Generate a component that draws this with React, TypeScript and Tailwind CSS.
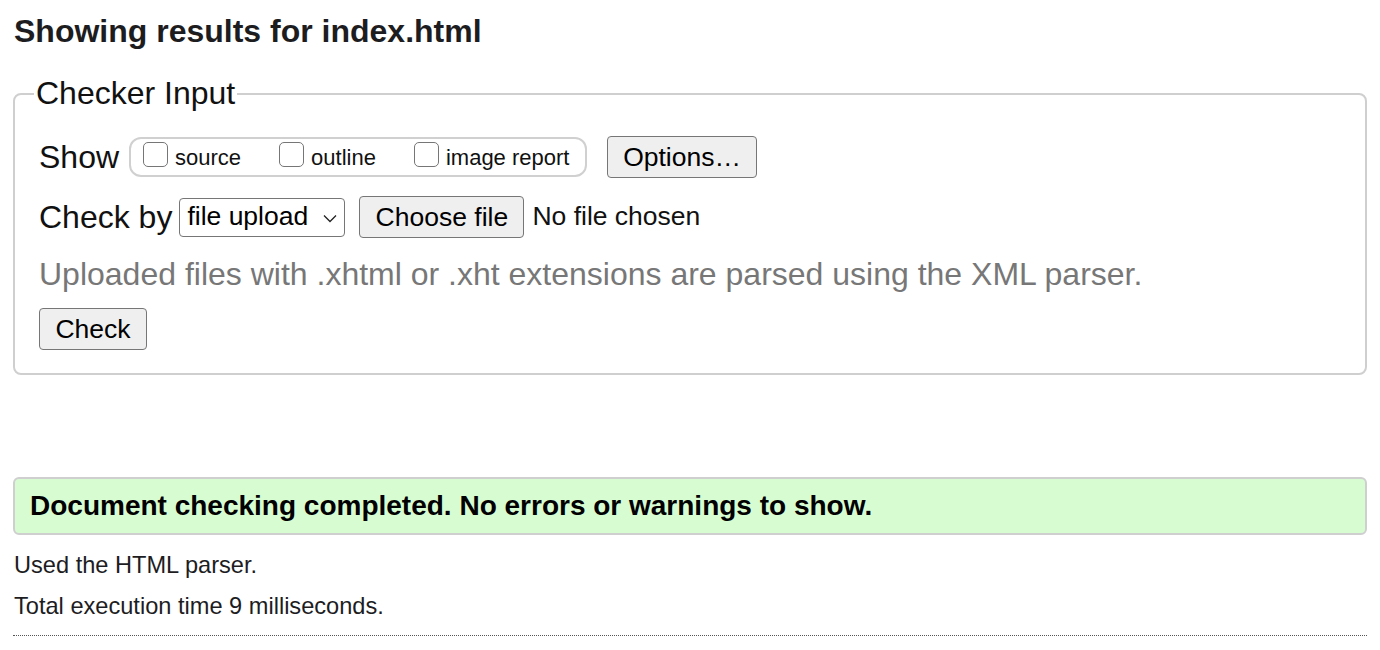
import React from 'react'

function Box({ label }: { label: string }) {
  return (
    <label className="flex items-end">
      <input
        type="checkbox"
        className="appearance-none w-[25px] h-[25px] border-[1.5px] border-[#767676] rounded-[5px] bg-white mb-[5px]"
      />
      <span className="ml-[7px] text-[22px] leading-[28px] text-[#111]">{label}</span>
    </label>
  )
}

function Btn({ children, className = '' }: { children: React.ReactNode; className?: string }) {
  return (
    <button
      className={`h-[42px] bg-[#efefef] border-[1.5px] border-[#767676] rounded-[4px] text-[26.5px] leading-none text-black ${className}`}
    >
      {children}
    </button>
  )
}

export default function App() {
  return (
    <div className="font-['Liberation_Sans',Arial,sans-serif] text-[#1d1d1f] bg-white min-h-[650px] px-[13px] pt-[13px]">
      <h2 className="text-[32px] leading-[37px] font-bold pl-[1px]">Showing results for index.html</h2>

      <fieldset className="mt-[25px] border-2 border-[#cfcfcf] rounded-[8px] pl-[19px] pr-4 pb-[23px]">
        <legend className="text-[32px] leading-[37px] px-[2px] text-[#111]">Checker Input</legend>
        <div className="pl-[5px]">
          <div className="mt-[23px] h-[44px] flex items-center">
            <span className="text-[32px] text-[#111] mr-[10px]">Show</span>
            <div className="h-[40px] w-[458px] border-2 border-[#d0d0d0] rounded-[12px] flex items-center pl-[12px] gap-[38px] pb-[1px]">
              <Box label="source" />
              <Box label="outline" />
              <Box label="image report" />
            </div>
            <Btn className="ml-[20px] w-[150px]">Options…</Btn>
          </div>

          <div className="mt-[16px] h-[44px] flex items-center">
            <span className="text-[32px] text-[#111] mr-[7px]">Check by</span>
            <div className="relative w-[166px] h-[39px] border-[1.5px] border-[#767676] rounded-[4px] bg-white flex items-center">
              <span className="pl-[7px] text-[26.5px] text-black">file upload</span>
              <svg className="absolute right-[7px] top-[15px]" width="14" height="9" viewBox="0 0 14 9" fill="none">
                <path d="M1 1.5l6 6 6-6" stroke="#222" strokeWidth="1.3" />
              </svg>
            </div>
            <Btn className="ml-[14px] w-[165px]">Choose file</Btn>
            <span className="ml-[8px] text-[26.5px] text-[#111]">No file chosen</span>
          </div>

          <p className="mt-[17px] text-[32px] leading-[37px] text-[#777]">
            Uploaded files with .xhtml or .xht extensions are parsed using the XML parser.
          </p>

          <Btn className="mt-[15px] w-[108px]">Check</Btn>
        </div>
      </fieldset>

      <div className="mt-[102px] h-[58px] border-2 border-[#cfcfcf] rounded-[6px] bg-[#d7fcd2] flex items-center pl-[15px]">
        <p className="text-[28px] font-bold text-black">Document checking completed. No errors or warnings to show.</p>
      </div>

      <p className="mt-[15px] text-[23.6px] leading-[30px] pl-[1px]">Used the HTML parser.</p>
      <p className="mt-[11px] text-[23.6px] leading-[30px] pl-[1px]">Total execution time 9 milliseconds.</p>
      <div className="mt-[14px] border-t border-dotted border-[#555]" />
    </div>
  )
}
